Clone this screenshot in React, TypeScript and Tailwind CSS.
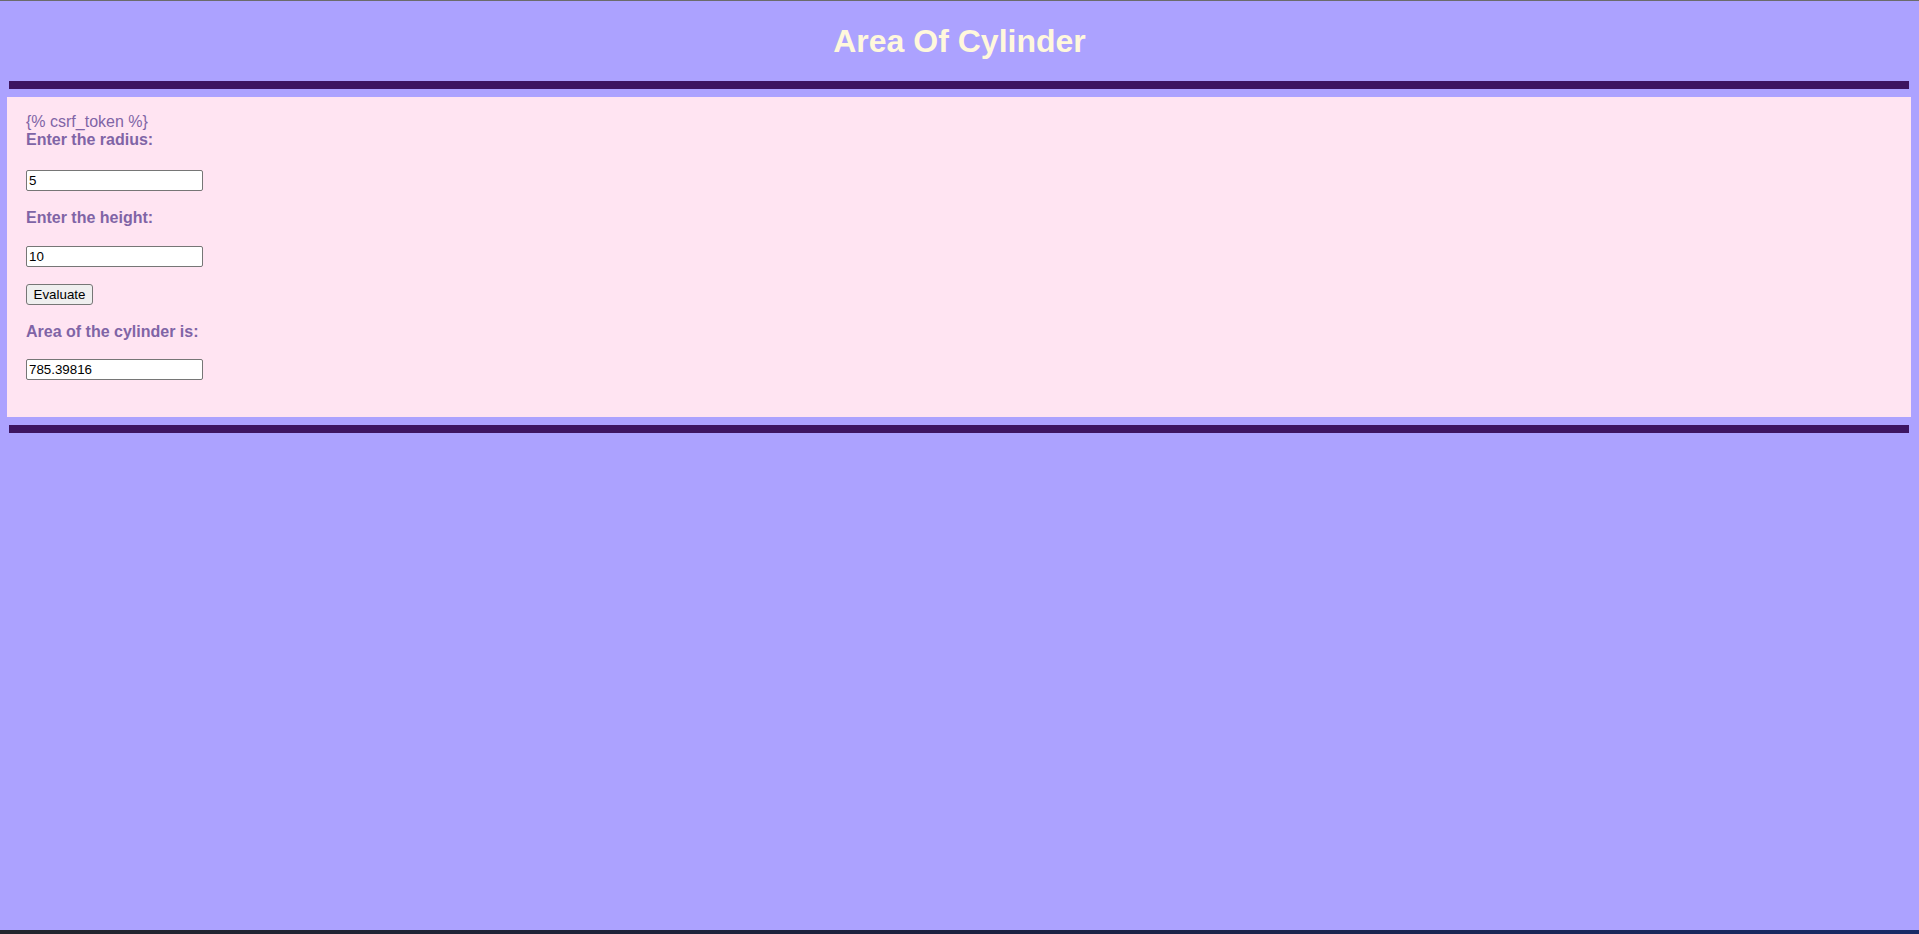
export default function App() {
  return (
    <div className="h-[934px] flex flex-col bg-[#aca2ff] font-['Liberation_Sans',Arial,sans-serif] border-t border-[#6b6b6b]">
      <header className="h-[80px] flex items-center justify-center">
        <h1 className="text-[32px] leading-[37px] font-bold text-[#fff8dc]">Area Of Cylinder</h1>
      </header>

      <div className="h-[8px] ml-[9px] mr-[10px] bg-[#3d1561]" />

      <main className="mt-[8px] ml-[7px] mr-[8px] bg-[#ffe4f2] pt-4 pb-[37px] pl-[19px] text-[16px] leading-[18px] text-[#8064a6]">
        <div>{"{% csrf_token %}"}</div>
        <div className="font-bold">Enter the radius:</div>
        <input
          type="text"
          defaultValue="5"
          className="block mt-[21px] w-[177px] h-[21px] bg-white border border-[#767676] rounded-[2px] pl-[2px] text-[13.33px] text-black outline-none"
        />
        <div className="font-bold mt-[18px]">Enter the height:</div>
        <input
          type="text"
          defaultValue="10"
          className="block mt-[19px] w-[177px] h-[21px] bg-white border border-[#767676] rounded-[2px] pl-[2px] text-[13.33px] text-black outline-none"
        />
        <button className="block mt-[17px] w-[67px] h-[21px] bg-[#efefef] border border-[#767676] rounded-[3px] text-[13.33px] leading-[19px] text-black text-center">
          Evaluate
        </button>
        <div className="font-bold mt-[18px]">Area of the cylinder is:</div>
        <input
          type="text"
          defaultValue="785.39816"
          className="block mt-[18px] w-[177px] h-[21px] bg-white border border-[#767676] rounded-[2px] pl-[2px] text-[13.33px] text-black outline-none"
        />
      </main>

      <div className="h-[8px] mt-[8px] ml-[9px] mr-[10px] bg-[#3d1561]" />

      <div className="flex-1" />
      <div className="h-[4px] bg-gradient-to-r from-[#23252d] via-[#1c2140] to-[#182a66]" />
    </div>
  );
}
